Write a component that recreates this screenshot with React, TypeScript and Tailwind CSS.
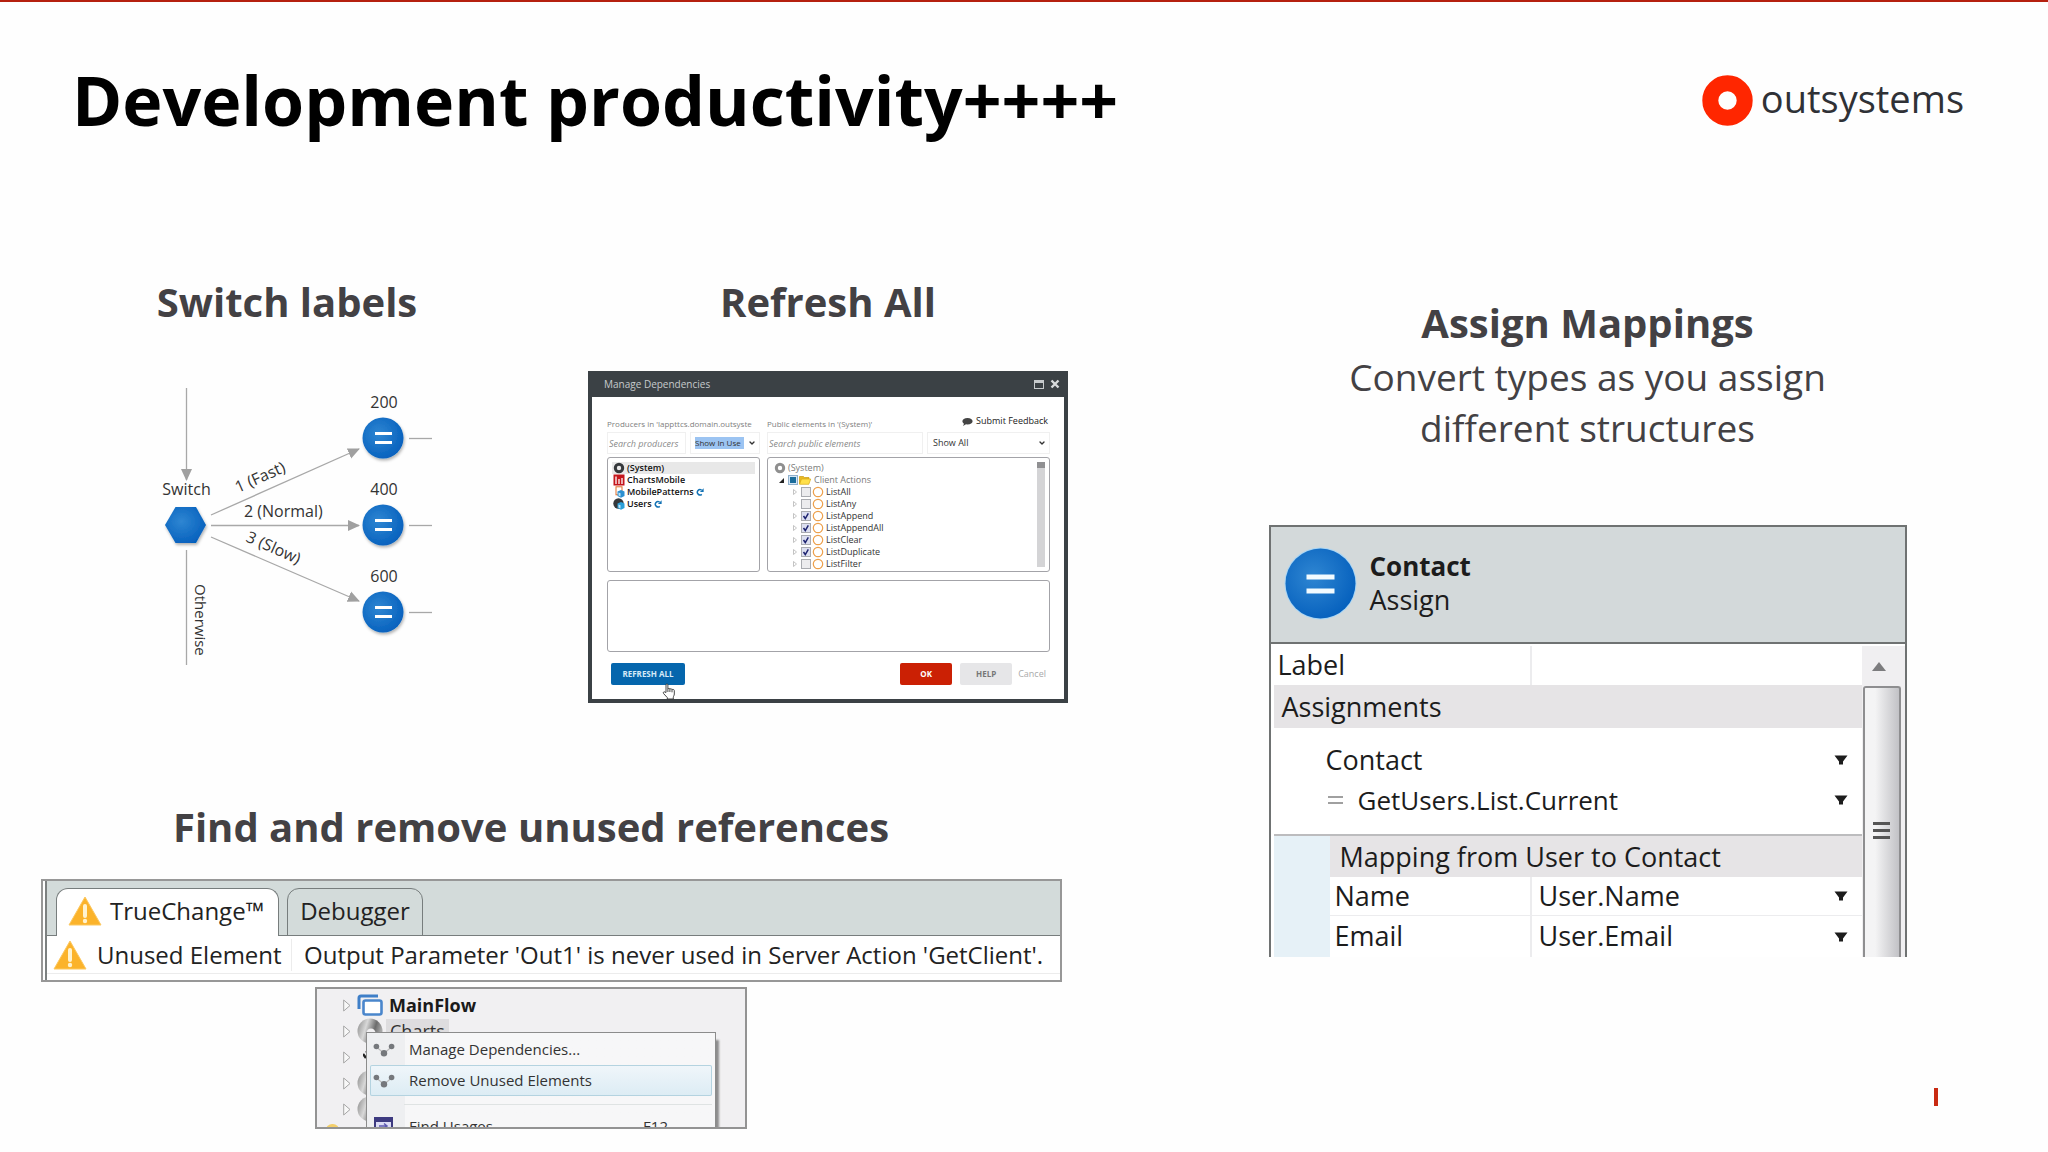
import type { ReactNode } from 'react';
import { ChevronDown } from 'lucide-react';

const producers = [
  { name: '(System)', icon: 'system', refresh: false },
  { name: 'ChartsMobile', icon: 'charts', refresh: false },
  { name: 'MobilePatterns', icon: 'patterns', refresh: true },
  { name: 'Users', icon: 'users', refresh: true },
];

const actions = [
  { name: 'ListAll', used: false },
  { name: 'ListAny', used: false },
  { name: 'ListAppend', used: true },
  { name: 'ListAppendAll', used: true },
  { name: 'ListClear', used: true },
  { name: 'ListDuplicate', used: true },
  { name: 'ListFilter', used: false },
];

const branches = [
  { label: '200', y: 68 },
  { label: '400', y: 155 },
  { label: '600', y: 242 },
];

function Logo() {
  return (
    <div className="flex items-center gap-2">
      <svg width="51" height="51" viewBox="0 0 51 51" aria-hidden="true">
        <circle cx="25.5" cy="25.5" r="17.2" fill="none" stroke="#ff2600" strokeWidth="16" />
      </svg>
      <span className="pb-1 text-[38px] leading-12 text-[#2f3136]">outsystems</span>
    </div>
  );
}

function Heading({ children }: { children: ReactNode }) {
  return <h2 className="text-center text-[40px] leading-12 font-bold text-[#434144]">{children}</h2>;
}

function SwitchDiagram() {
  return (
    <svg
      viewBox="-3 1 320 310"
      className="h-[310px] w-[320px]"
      role="img"
      aria-label="Switch with labelled branches"
      fontSize="16"
      fill="#333"
    >
      <defs>
        <radialGradient id="ball" cx="0.4" cy="0.4" r="0.65">
          <stop offset="0" stopColor="#2f86d2" />
          <stop offset="1" stopColor="#0560bd" />
        </radialGradient>
        <marker id="head" viewBox="0 0 12 12" refX="11" refY="6" markerWidth="12" markerHeight="12" markerUnits="userSpaceOnUse" orient="auto">
          <path d="M0 0.5 L12 6 L0 11.5 Z" fill="#a0a0a0" />
        </marker>
        <filter id="soft" x="-30%" y="-30%" width="160%" height="160%">
          <feDropShadow dx="1" dy="2" stdDeviation="1.5" floodOpacity="0.3" />
        </filter>
      </defs>
      <g stroke="#a8a8a8" strokeWidth="1.3">
        <line x1="56.5" y1="18" x2="56.5" y2="110" markerEnd="url(#head)" />
        <line x1="56.5" y1="180" x2="56.5" y2="295" />
        <line x1="81" y1="145" x2="229" y2="79" markerEnd="url(#head)" />
        <line x1="81" y1="155.5" x2="229" y2="155.5" markerEnd="url(#head)" />
        <line x1="81" y1="167" x2="229" y2="231" markerEnd="url(#head)" />
      </g>
      <text x="56.5" y="125" textAnchor="middle">Switch</text>
      <path d="M35 155 L45.5 137 H66 L76 155 L66 173 H45.5 Z" fill="url(#ball)" filter="url(#soft)" />
      <text transform="translate(108 123) rotate(-24)">1 (Fast)</text>
      <text x="114" y="147">2 (Normal)</text>
      <text transform="translate(115 171) rotate(24)">3 (Slow)</text>
      <text transform="translate(65 214) rotate(90)" fontSize="15">Otherwise</text>
      {branches.map((b) => (
        <g key={b.label}>
          <text x="254" y={b.y - 30} textAnchor="middle">{b.label}</text>
          <circle cx="253" cy={b.y} r="20.5" fill="url(#ball)" filter="url(#soft)" />
          <path d={`M245 ${b.y - 4.5} h17 M245 ${b.y + 4.5} h17`} stroke="#fff" strokeWidth="3" />
          <line x1="279" x2="302" y1={b.y + 0.5} y2={b.y + 0.5} stroke="#a8a8a8" strokeWidth="1.3" />
        </g>
      ))}
    </svg>
  );
}

function ProducerIcon({ kind }: { kind: string }) {
  return (
    <svg width="12" height="12" viewBox="0 0 12 12" className="shrink-0" aria-hidden="true">
      {kind === 'system' && <circle cx="6" cy="6" r="3.7" fill="none" stroke="#35383b" strokeWidth="3" />}
      {kind === 'muted' && <circle cx="6" cy="6" r="3.7" fill="none" stroke="#8f8f8f" strokeWidth="3" />}
      {kind === 'charts' && (
        <>
          <rect x="0.5" y="0.5" width="11" height="11" fill="#c4161c" />
          <path d="M3 2.5 V10 M6 5 V10 M9 4 V10" stroke="#fff" strokeWidth="1.3" />
        </>
      )}
      {kind === 'patterns' && (
        <>
          <rect x="3" y="0.8" width="6" height="8" fill="#fff" stroke="#e0702c" />
          <path d="M4.5 5.5 L8 4 L11.5 5.5 V10 L8 11.8 L4.5 10 Z" fill="#2b8fd0" />
          <path d="M5.5 6.5 L7.5 7.3 V10.5 L5.5 9.6 Z" fill="#bfe3f7" />
        </>
      )}
      {kind === 'users' && (
        <>
          <circle cx="5.5" cy="5.5" r="5.2" fill="#35383b" />
          <path d="M4.5 5.5 L8 4 L11.5 5.5 V10 L8 11.8 L4.5 10 Z" fill="#2b9fd8" />
          <path d="M5.5 6.5 L7.5 7.3 V10.5 L5.5 9.6 Z" fill="#bfe3f7" />
        </>
      )}
    </svg>
  );
}

function RefreshIcon() {
  return (
    <svg width="8" height="8" viewBox="0 0 8 8" aria-hidden="true">
      <path d="M5.8 6.3 A2.7 2.7 0 1 1 5.6 2" fill="none" stroke="#1272b5" strokeWidth="1.5" />
      <path d="M7.6 0.3 V4 H3.9 Z" fill="#1272b5" />
    </svg>
  );
}

function ActionRow({ name, used }: { name: string; used: boolean }) {
  return (
    <li className="flex h-3 items-center pl-[19px]">
      <svg width="4" height="6" viewBox="0 0 4 6" className="mr-1 shrink-0" aria-hidden="true">
        <path d="M0.5 0.5 L3.5 3 L0.5 5.5 Z" fill="#fff" stroke="#b5b5b5" strokeWidth="0.8" />
      </svg>
      <label className="flex items-center">
        <span className="relative flex">
          <input
            type="checkbox"
            defaultChecked={used}
            className="peer size-[10px] appearance-none border border-[#a9abb0] bg-[#ececee] checked:bg-[#dcdff0]"
          />
          <svg viewBox="0 0 10 10" className="pointer-events-none absolute inset-0 hidden size-[10px] peer-checked:block" aria-hidden="true">
            <path d="M2.5 5 L4.3 7.5 L7.3 2.3" fill="none" stroke="#1d2370" strokeWidth="1.5" />
          </svg>
        </span>
        <svg width="12" height="12" viewBox="0 0 12 12" className="mx-px" aria-hidden="true">
          <circle cx="6" cy="6" r="4.7" fill="#fff" stroke="#eda04c" strokeWidth="1.2" />
        </svg>
        <span className="pl-px">{name}</span>
      </label>
    </li>
  );
}

function DependenciesDialog() {
  return (
    <div className="w-[480px] border-4 border-t-0 border-[#3b4145] bg-white text-[9px] leading-3 text-[#333]">
      <div className="flex h-[26px] items-center justify-between bg-[#3b4145] pr-1 pl-3">
        <span className="text-[10px] text-[#c6cacc]">Manage Dependencies</span>
        <div className="flex items-center gap-[6px]">
          <button type="button" aria-label="Maximize" className="h-[9px] w-[10px] border border-t-3 border-[#c6cacc]" />
          <button type="button" aria-label="Close">
            <svg width="10" height="10" viewBox="0 0 10 10">
              <path d="M1.5 1.5 L8.5 8.5 M8.5 1.5 L1.5 8.5" stroke="#d8dbdc" strokeWidth="2.4" />
            </svg>
          </button>
        </div>
      </div>

      <div className="pr-[14px] pl-[15px]">
        <div className="grid grid-cols-[153px_1fr] gap-x-[7px] pt-[17px]">
          <div className="pt-1 text-[8px] whitespace-nowrap text-[#808080]">
            Producers in 'lappttcs.domain.outsyste
          </div>
          <div className="flex h-[18px] justify-between whitespace-nowrap">
            <span className="pt-1 text-[8px] text-[#808080]">Public elements in '(System)'</span>
            <a href="#feedback" className="flex gap-[3px] pt-px pr-[2px] text-[#222]">
              <svg width="11" height="10" viewBox="0 0 11 10" className="mt-[2px]" aria-hidden="true">
                <path d="M5.5 1 C8.5 1 10.6 2.3 10.6 4.2 C10.6 6.2 8.5 7.4 5.5 7.4 L4 7.3 L1 9 L2 6.7 C1 6 0.4 5.2 0.4 4.2 C0.4 2.3 2.5 1 5.5 1 Z" fill="#444" />
              </svg>
              Submit Feedback
            </a>
          </div>

          <div className="flex gap-1">
            <input
              type="text"
              aria-label="Search producers"
              placeholder="Search producers"
              className="h-[22px] w-[79px] border border-[#f0f0f0] px-px italic placeholder:text-[#8a8a8a]"
            />
            <div className="flex h-[22px] flex-1 items-center justify-between border border-[#f0f0f0] pr-[3px] pl-1">
              <select aria-label="Producer filter" className="h-3 w-[49px] appearance-none bg-[#9cc4f2] text-[8px] text-[#333]">
                <option>Show In Use</option>
              </select>
              <ChevronDown className="size-2 text-[#333]" strokeWidth={4} />
            </div>
          </div>
          <div className="flex gap-1">
            <input
              type="text"
              aria-label="Search public elements"
              placeholder="Search public elements"
              className="h-[22px] w-[156px] border border-[#f0f0f0] px-px italic placeholder:text-[#8a8a8a]"
            />
            <div className="flex h-[22px] flex-1 items-center border border-[#f0f0f0] pr-[3px] pl-[5px]">
              <select aria-label="Element filter" className="flex-1 appearance-none text-[#333]">
                <option>Show All</option>
              </select>
              <ChevronDown className="size-2 text-[#333]" strokeWidth={4} />
            </div>
          </div>

          <ul className="mt-[3px] h-[115px] rounded-[3px] border border-[#a3a3a8] p-1 font-semibold text-[#111]">
            {producers.map((p, i) => (
              <li
                key={p.name}
                className={i === 0 ? 'flex h-3 items-center gap-[2px] bg-[#e8e8e8] pl-px' : 'flex h-3 items-center gap-[2px] pl-px'}
              >
                <ProducerIcon kind={p.icon} />
                {p.name}
                {p.refresh ? <RefreshIcon /> : null}
              </li>
            ))}
          </ul>
          <div className="mt-[3px] flex h-[115px] justify-between rounded-[3px] border border-[#a3a3a8] pt-1 pr-1 pl-[6px]">
            <ul>
              <li className="flex h-3 items-center gap-[2px] text-[#7a7a7a]">
                <ProducerIcon kind="muted" />
                (System)
              </li>
              <li className="flex h-3 items-center pl-[5px] text-[#7a7a7a]">
                <svg width="5" height="5" viewBox="0 0 5 5" className="mr-1" aria-hidden="true">
                  <path d="M5 0 V5 H0 Z" fill="#222" />
                </svg>
                <span className="flex size-[10px] items-center justify-center border border-[#8fb0cc] bg-[#d5e6f5]">
                  <span className="size-[6px] bg-[#1b6d9c]" />
                </span>
                <svg width="12" height="10" viewBox="0 0 12 10" className="mr-[3px] ml-px" aria-hidden="true">
                  <path d="M0.5 9 V1.5 H4.5 L5.5 2.5 H10 V4" fill="#e8b923" stroke="#c99a12" strokeWidth="0.7" />
                  <path d="M0.5 9.3 L2.5 4 H11.7 L9.8 9.3 Z" fill="#ffe04a" stroke="#d9aa16" strokeWidth="0.7" />
                </svg>
                Client Actions
              </li>
              {actions.map((a) => (
                <ActionRow key={a.name} name={a.name} used={a.used} />
              ))}
            </ul>
            <div className="mb-1 w-2 bg-[#d4d4d6]">
              <div className="h-[6px] bg-[#909092]" />
            </div>
          </div>
        </div>

        <div className="mt-2 h-[72px] rounded-[3px] border border-[#a3a3a8]" />

        <div className="flex items-center pt-[11px] pr-1 pb-[14px] pl-1 text-[8px] font-bold">
          <div className="relative">
            <button type="button" className="h-[22px] w-[74px] rounded-[2px] bg-[#0566ad] text-[#d6eaf8]">
              REFRESH ALL
            </button>
            {/* hand cursor over the button */}
            <svg viewBox="0 0 14 17" className="absolute top-5 left-[51px] h-[17px] w-[14px]" aria-hidden="true">
              <path
                d="M4 9.5 V1.8 C4 0.6 5.9 0.6 5.9 1.8 V6 C6.3 5 7.9 5.2 7.9 6.2 C8.4 5.4 9.9 5.6 10 6.7 C10.7 6 12.3 6.4 12.3 7.6 V11 C12.3 12.6 11.3 13.3 11.3 14.3 V16 H5.3 V14.6 L1.6 10.6 C0.6 9.4 2 8.2 3 9.1 Z M7.9 6.2 V9 M10 6.7 V9.3 M5.9 6 V9"
                fill="#fff"
                stroke="#333"
                strokeWidth="0.9"
              />
            </svg>
          </div>
          <button type="button" className="ml-auto h-[22px] w-[52px] rounded-[2px] bg-[#cb2004] text-white">
            OK
          </button>
          <button type="button" className="ml-2 h-[22px] w-[52px] rounded-[2px] bg-[#e6e6e8] text-[#777]">
            HELP
          </button>
          <button type="button" className="ml-[6px] text-[9px] font-normal text-[#aaa]">
            Cancel
          </button>
        </div>
      </div>
    </div>
  );
}

function Warning() {
  return (
    <svg width="34" height="30" viewBox="0 0 34 30" className="shrink-0" aria-hidden="true">
      <path d="M17 1 L33 29 H1 Z" fill="#fbb32b" stroke="#fcc861" strokeLinejoin="round" />
      <path d="M17 10 V20" stroke="#fff3d0" strokeWidth="4" strokeLinecap="round" />
      <circle cx="17" cy="25" r="2.2" fill="#fff3d0" />
    </svg>
  );
}

function TrueChangePanel() {
  return (
    <div className="border-2 border-[#979797] bg-white pl-[2px] text-2xl text-[#222]">
      <div className="border-l-2 border-[#7c8080]">
        <div className="flex h-[55px] items-end gap-2 bg-[#d3dbda] pl-[9px] shadow-[inset_0_-1px_0_#777d7d]">
          <button type="button" className="flex h-[48px] w-[223px] items-center gap-2 rounded-t-xl border border-b-0 border-[#777d7d] bg-white pb-[3px] pl-[11px]">
            <Warning />
            TrueChange™
          </button>
          <button type="button" className="h-[48px] w-[136px] rounded-t-xl border border-[#777d7d] pb-[3px]">
            Debugger
          </button>
        </div>
        <div className="flex h-[38px] items-center border-b border-[#ececec] pl-[6px] whitespace-nowrap">
          <Warning />
          <span className="w-[205px] border-r border-[#ececec] pl-[10px]">Unused Element</span>
          <span className="pl-3">Output Parameter 'Out1' is never used in Server Action 'GetClient'.</span>
        </div>
        <div className="h-[6px]" />
      </div>
    </div>
  );
}

function TreeArrow() {
  return (
    <svg width="8" height="13" viewBox="0 0 8 13" aria-hidden="true">
      <path d="M0.7 1 L7 6.5 L0.7 12 Z" fill="#f8f8f8" stroke="#a5a5a5" />
    </svg>
  );
}

function Sphere() {
  return (
    <svg width="26" height="26" viewBox="0 0 26 26" aria-hidden="true">
      <defs>
        <linearGradient id="steel" x1="0" y1="0" x2="1" y2="0.3">
          <stop offset="0" stopColor="#8a8a8a" />
          <stop offset="0.4" stopColor="#d8d8d8" />
          <stop offset="0.75" stopColor="#6c6c6c" />
          <stop offset="1" stopColor="#a8a8a8" />
        </linearGradient>
      </defs>
      <circle cx="13" cy="13" r="12.5" fill="url(#steel)" />
      <circle cx="14" cy="15" r="4.5" fill="#f1f0f2" />
    </svg>
  );
}

function DotsIcon() {
  return (
    <svg width="22" height="14" viewBox="0 0 22 14" className="mx-[3px] shrink-0" aria-hidden="true">
      <path d="M3 3.5 L11 10.5 L19 3.5" fill="none" stroke="#bbb" strokeWidth="1.2" />
      <g fill="#75787c">
        <circle cx="3.4" cy="3.5" r="2.8" />
        <circle cx="18.6" cy="3.5" r="2.8" />
        <circle cx="11" cy="10.3" r="3.2" />
      </g>
    </svg>
  );
}

function ContextMenu() {
  return (
    <div className="relative h-[142px] w-[432px] overflow-hidden border-2 border-[#939393] bg-[#f1f0f2] pt-[3px] pl-[26px] text-[15px] text-[#333]">
      <ul>
        <li className="flex h-[26px] items-center gap-[6px]">
          <TreeArrow />
          <svg width="26" height="22" viewBox="0 0 26 22" aria-hidden="true">
            <path d="M2 15 V4 Q2 2 4 2 H21" fill="none" stroke="#3f7fc8" strokeWidth="3" />
            <rect x="6.5" y="6.5" width="18" height="14" rx="2" fill="#fff" stroke="#4a86cc" strokeWidth="2.6" />
          </svg>
          <span className="text-lg leading-6 font-bold text-[#1a1a1a]">MainFlow</span>
        </li>
        <li className="flex h-[26px] items-center gap-[3px]">
          <TreeArrow />
          <span className="ml-[3px]">
            <Sphere />
          </span>
          <span className="bg-[#dedddf] px-1 text-lg leading-6">Charts</span>
        </li>
        <li className="flex h-[26px] items-center gap-[12px]">
          <TreeArrow />
          <svg width="10" height="14" viewBox="0 0 10 14" aria-hidden="true">
            <path d="M0 4 L3 8 M3 1 L8 5" stroke="#222" strokeWidth="2.5" />
          </svg>
        </li>
        <li className="flex h-[26px] items-center gap-[6px]">
          <TreeArrow />
          <Sphere />
        </li>
        <li className="flex h-[26px] items-center gap-[6px]">
          <TreeArrow />
          <Sphere />
        </li>
      </ul>
      <div className="absolute top-[135px] left-[9px] h-3 w-[13px] rounded-full bg-[#f3cf6b]" />

      <div
        role="menu"
        className="absolute top-[43px] left-[49px] w-[350px] border border-[#8c8c8c] bg-linear-to-r from-[#eeeff1] from-[38px] to-[#f7f7f8] to-[38px] px-[3px] pt-px shadow-[3px_8px_2px_#8d8d8d]"
      >
        <button type="button" role="menuitem" className="flex h-[31px] w-full items-center gap-[11px]">
          <DotsIcon />
          <span>Manage Dependencies...</span>
        </button>
        <button
          type="button"
          role="menuitem"
          className="flex h-[31px] w-full items-center gap-[11px] rounded-[2px] bg-linear-to-b from-[#f0f6fa] to-[#dcecf4] shadow-[inset_0_0_0_1px_#b4d3e0]"
        >
          <DotsIcon />
          <span>Remove Unused Elements</span>
        </button>
        <div className="mt-2 ml-[34px] h-px bg-[#dfe3e3]" />
        <button type="button" role="menuitem" className="mt-[6px] flex h-[30px] w-full items-center">
          <svg width="19" height="18" viewBox="0 0 19 18" className="mr-4 ml-1" aria-hidden="true">
            <rect x="1" y="1" width="17" height="16" fill="#dcdcf5" stroke="#3d3a80" strokeWidth="2" />
            <path d="M1 3 H18" stroke="#3d3a80" strokeWidth="4" />
            <path d="M5 9 H13 M10 6.5 L13 9 L10 11.5" fill="none" stroke="#5c58b0" strokeWidth="1.5" />
          </svg>
          <span>Find Usages</span>
          <span className="mr-[44px] ml-auto">F12</span>
        </button>
      </div>
    </div>
  );
}

function DropArrow() {
  return (
    <button type="button" aria-label="Choose value" className="mr-[14px] ml-auto">
      <svg width="14" height="10" viewBox="0 0 14 10">
        <path d="M0.5 0.5 H13.5 L9 6.5 V9.5 H5 V6.5 Z" fill="#1c1c1c" />
      </svg>
    </button>
  );
}

function AssignPanel() {
  return (
    <div className="w-[638px] border-2 border-b-0 border-[#6f7272] bg-white text-[27px] text-[#1c1c1c]">
      <div className="flex h-[117px] items-center gap-[13px] border-b-2 border-[#6f7272] bg-[#d3d9da] pb-[2px] pl-[13px]">
        <svg width="73" height="73" viewBox="0 0 73 73" aria-hidden="true">
          <circle cx="36.5" cy="36.5" r="36" fill="#a9d6f5" />
          <circle cx="36.5" cy="36.5" r="35" fill="url(#ball)" />
          <path d="M22.5 30 H50.5 M22.5 44 H50.5" stroke="#f2fbff" strokeWidth="5" />
        </svg>
        <div className="pb-px leading-[33px]">
          <div className="text-[26px] font-bold">Contact</div>
          <div>Assign</div>
        </div>
      </div>

      <div className="flex pt-[2px]">
        <div className="min-w-0 flex-1 pl-[3px]">
          <div className="flex h-[39px] items-center">
            <label htmlFor="label" className="w-[256px] shrink-0 pl-1">Label</label>
            <input id="label" type="text" className="h-full min-w-0 flex-1 border-l-2 border-[#ececee]" />
          </div>
          <div className="h-[43px] bg-[#e6e4e6] pl-2 leading-[43px]">Assignments</div>
          <div className="border-b-2 border-[#bcbcbe] pt-3 pb-[14px]">
            <div className="flex h-[40px] items-center pl-[52px]">
              Contact
              <DropArrow />
            </div>
            <div className="flex h-[40px] items-center pl-[54px]">
              <span className="h-2 w-[15px] border-y-2 border-[#a0a0a0]" />
              <span className="pl-[15px] text-[26px]">GetUsers.List.Current</span>
              <DropArrow />
            </div>
          </div>
          <div className="flex">
            <div className="w-[56px] bg-[#e6f1f7]" />
            <div className="flex-1">
              <div className="h-[41px] bg-[#e6e4e6] pl-[10px] leading-[41px]">Mapping from User to Contact</div>
              <div className="flex h-[39px] items-center border-b border-[#ececee]">
                <span className="w-[200px] pl-[5px]">Name</span>
                <span className="flex h-full flex-1 items-center border-l-2 border-[#ececee] pl-[7px]">
                  User.Name
                  <DropArrow />
                </span>
              </div>
              <div className="flex h-[41px] items-center">
                <span className="w-[200px] pl-[5px]">Email</span>
                <span className="flex h-full flex-1 items-center border-l-2 border-[#ececee] pl-[7px]">
                  User.Email
                  <DropArrow />
                </span>
              </div>
            </div>
          </div>
        </div>

        {/* scrollbar */}
        <div className="flex w-[43px] shrink-0 flex-col bg-[#f0eff1] pr-1">
          <div className="flex h-[40px] items-center justify-center pr-1">
            <svg width="14" height="9" viewBox="0 0 14 9" aria-hidden="true">
              <path d="M7 0 L14 9 H0 Z" fill="#7c7c7e" />
            </svg>
          </div>
          <div className="ml-px flex flex-1 flex-col items-center justify-center gap-1 rounded-t-[3px] border-2 border-b-0 border-[#8e8e90] bg-linear-to-r from-[#f4f4f5] from-30% to-[#c2c2c6] pt-4">
            <div className="h-[3px] w-[17px] bg-[#555]" />
            <div className="h-[3px] w-[17px] bg-[#555]" />
            <div className="h-[3px] w-[17px] bg-[#555]" />
          </div>
        </div>
      </div>
    </div>
  );
}

export default function App() {
  return (
    <div className="min-h-screen border-t-2 border-[#b5200f] bg-[#fefefe] font-['Open_Sans','Noto_Sans',sans-serif]">
      <header className="flex items-center justify-between pt-[62px] pr-[84px] pl-[72px]">
        <h1 className="text-[68px] leading-18 font-bold text-black">Development productivity++++</h1>
        <Logo />
      </header>

      <main className="grid grid-cols-[1127fr_921fr]">
        <div className="pt-[142px] pr-[45px]">
          <div className="grid grid-cols-[574fr_508fr]">
            <section className="flex flex-col items-center gap-[45px]">
              <Heading>Switch labels</Heading>
              <SwitchDiagram />
            </section>
            <section className="flex flex-col items-center gap-[45px]">
              <Heading>Refresh All</Heading>
              <DependenciesDialog />
            </section>
          </div>

          <section className="pt-[100px] pr-5">
            <Heading>Find and remove unused references</Heading>
            <div className="pt-7 pl-[41px]">
              <TrueChangePanel />
            </div>
            <div className="flex justify-center pt-[5px]">
              <ContextMenu />
            </div>
          </section>
        </div>

        <section className="flex flex-col items-center pt-[163px]">
          <Heading>Assign Mappings</Heading>
          <p className="w-[520px] pt-1 pb-[72px] text-center text-[37px] leading-[51px] text-[#434144]">
            Convert types as you assign different structures
          </p>
          <AssignPanel />
          <div className="mt-auto mr-[110px] mb-[23px] h-[18px] w-1 self-end bg-[#c92a12]" />
        </section>
      </main>
    </div>
  );
}
